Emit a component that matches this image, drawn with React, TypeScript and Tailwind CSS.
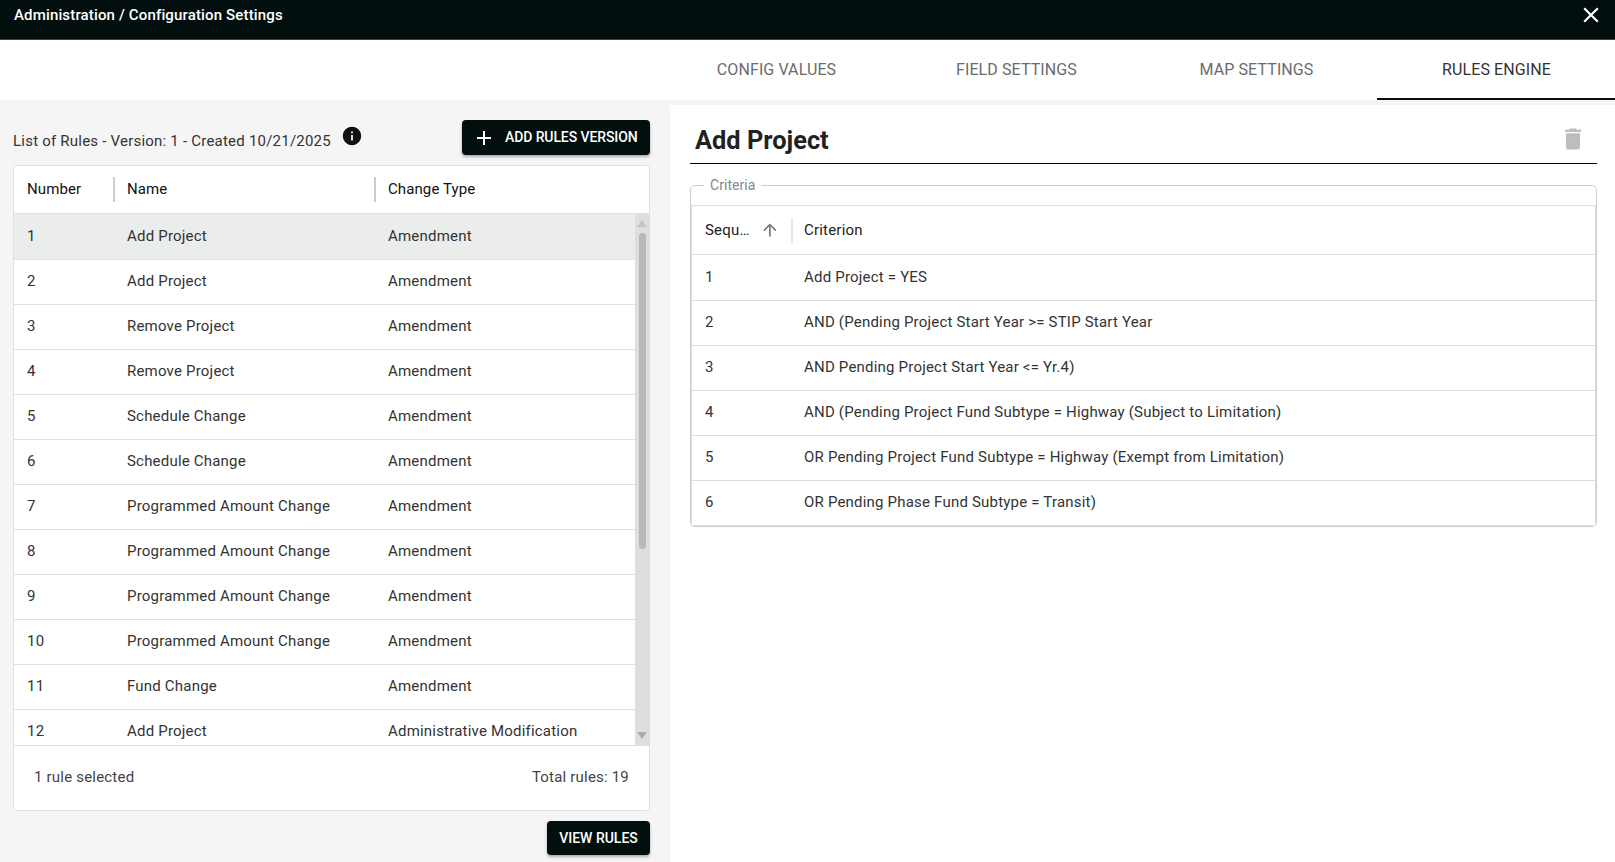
import React from "react";
import { MdAdd, MdClose, MdInfo, MdDelete, MdArrowUpward } from "react-icons/md";

const rules = [
  ["1", "Add Project", "Amendment"],
  ["2", "Add Project", "Amendment"],
  ["3", "Remove Project", "Amendment"],
  ["4", "Remove Project", "Amendment"],
  ["5", "Schedule Change", "Amendment"],
  ["6", "Schedule Change", "Amendment"],
  ["7", "Programmed Amount Change", "Amendment"],
  ["8", "Programmed Amount Change", "Amendment"],
  ["9", "Programmed Amount Change", "Amendment"],
  ["10", "Programmed Amount Change", "Amendment"],
  ["11", "Fund Change", "Amendment"],
  ["12", "Add Project", "Administrative Modification"],
];

const criteria = [
  ["1", "Add Project = YES"],
  ["2", "AND (Pending Project Start Year >= STIP Start Year"],
  ["3", "AND Pending Project Start Year <= Yr.4)"],
  ["4", "AND (Pending Project Fund Subtype = Highway (Subject to Limitation)"],
  ["5", "OR Pending Project Fund Subtype = Highway (Exempt from Limitation)"],
  ["6", "OR Pending Phase Fund Subtype = Transit)"],
];

const tabs = ["CONFIG VALUES", "FIELD SETTINGS", "MAP SETTINGS", "RULES ENGINE"];

export default function App() {
  return (
    <div className="flex h-[862px] w-full flex-col overflow-hidden bg-white font-['Roboto',sans-serif] text-[14px] text-[#212121]">
      <header className="flex h-[40px] shrink-0 items-start justify-between border-b border-[#444] bg-[#020f0e] pl-[14px] pr-[11px] text-white">
        <span className="mt-[5px] text-[15px] font-medium leading-[20px] tracking-[0.15px]">Administration / Configuration Settings</span>
        <MdClose className="mt-[2px] text-[26px]" />
      </header>

      <nav className="flex h-[60px] shrink-0 justify-end gap-[2px] bg-white">
        {tabs.map((t, i) => (
          <div
            key={t}
            className={
              i === 3
                ? "flex w-[238px] items-center justify-center border-b-2 border-[#020f0e] pl-[1px] pt-[2px] text-[16px] tracking-[0.1px] text-[#333]"
                : "flex w-[238px] items-center justify-center pl-[1px] text-[16px] tracking-[0.1px] text-[#6b6b6b]"
            }
          >
            {t}
          </div>
        ))}
      </nav>

      <main className="flex min-h-0 flex-1 bg-[#f5f5f5]">
        <section className="flex w-[670px] shrink-0 flex-col pl-[13px] pr-[20px]">
          <div className="flex h-[65px] shrink-0 items-start justify-between pt-[20px]">
            <div className="flex items-start">
              <span className="mt-[11px] text-[15px] leading-[20px] tracking-[0.22px] text-[#333]">List of Rules - Version: 1 - Created 10/21/2025</span>
              <MdInfo className="ml-[10px] mt-[5px] text-[22px] text-[#111]" />
            </div>
            <button className="flex h-[35px] w-[188px] items-center rounded-[4px] bg-[#020f0e] pl-[10px] text-[14px] font-medium tracking-[-0.1px] text-white shadow-[0_2px_3px_rgba(0,0,0,0.3)]">
              <MdAdd className="text-[24px]" />
              <span className="ml-[9px]">ADD RULES VERSION</span>
            </button>
          </div>

          <div className="flex h-[646px] shrink-0 flex-col overflow-hidden rounded-[4px] border border-[#e0e0e0] bg-white">
            <div className="flex h-[48px] shrink-0 items-center border-b border-[#e0e0e0] text-[15px] tracking-[0.1px] text-[#111]">
              <div className="flex w-[101px] items-center justify-between pl-[13px]">
                <span>Number</span>
                <span className="h-[25px] w-[2px] bg-[#ccc]" />
              </div>
              <div className="flex w-[261px] items-center justify-between pl-[12px]">
                <span>Name</span>
                <span className="h-[25px] w-[2px] bg-[#ccc]" />
              </div>
              <div className="pl-[12px]">Change Type</div>
            </div>

            <div className="flex min-h-0 flex-1 border-b border-[#e0e0e0]">
              <div className="min-w-0 flex-1 overflow-hidden text-[15px] tracking-[0.2px]">
                {rules.map((r, i) => (
                  <div
                    key={r[0]}
                    className={
                      i === 0
                        ? "flex h-[46px] items-center border-b border-[#e0e0e0] bg-[#ebeded] text-[#333]"
                        : "flex h-[45px] items-center border-b border-[#e0e0e0] pb-[1px] text-[#333]"
                    }
                  >
                    <div className="w-[100px] pl-[13px]">{r[0]}</div>
                    <div className="w-[261px] pl-[13px]">{r[1]}</div>
                    <div className="pl-[13px]">{r[2]}</div>
                  </div>
                ))}
              </div>
              <div className="flex w-[14px] shrink-0 flex-col items-center bg-[#dedede]">
                <svg className="mt-[6px] shrink-0" width="10" height="7" viewBox="0 0 10 7">
                  <path d="M5 0 L10 7 L0 7 Z" fill="#c4c4c4" />
                </svg>
                <div className="mt-[6px] h-[316px] w-[7px] shrink-0 rounded-[4px] bg-[#b8b8b8]" />
                <div className="flex-1" />
                <svg className="mb-[6px] shrink-0" width="10" height="7" viewBox="0 0 10 7">
                  <path d="M5 7 L10 0 L0 0 Z" fill="#aaaaaa" />
                </svg>
              </div>
            </div>

            <div className="flex h-[64px] shrink-0 justify-between pl-[20px] pr-[20px] pt-[21px] text-[15px] leading-[20px] tracking-[0.2px] text-[#444]">
              <span>1 rule selected</span>
              <span>Total rules: 19</span>
            </div>
          </div>

          <div className="flex shrink-0 justify-end pt-[10px]">
            <button className="flex h-[34px] w-[103px] items-center justify-center rounded-[4px] bg-[#020f0e] text-[14px] font-medium text-white shadow-[0_2px_3px_rgba(0,0,0,0.3)]">
              VIEW RULES
            </button>
          </div>
        </section>

        <section className="mt-[5px] flex min-w-0 flex-1 flex-col bg-white pl-[20px] pr-[18px]">
          <div className="flex h-[59px] shrink-0 items-start justify-between border-b border-[#000] pl-[5px]">
            <h1 className="mt-[18px] text-[25.4px] font-bold leading-[34px] text-[#212121]">Add Project</h1>
            <MdDelete className="mr-[10px] mt-[20px] text-[28px] text-[#bdbdbd]" />
          </div>

          <fieldset className="mt-[11px] rounded-[5px] border border-[#ccc]">
            <legend className="ml-[13px] px-[6px] text-[14px] leading-[20px] tracking-[0.05px] text-[#7f8890]">Criteria</legend>
            <div className="mt-[10px] border border-b-0 border-[#e0e0e0] border-x-[#ddd]">
              <div className="flex h-[49px] items-center border-b border-[#e0e0e0] text-[15px] tracking-[0.2px] text-[#222]">
                <div className="flex w-[101px] items-center pl-[13px]">
                  <span className="w-[56px]">Sequ…</span>
                  <MdArrowUpward className="text-[20px] text-[#777]" />
                  <span className="ml-[11px] h-[25px] w-[2px] bg-[#e4e4e4]" />
                </div>
                <div className="pl-[11px]">Criterion</div>
              </div>
              {criteria.map((c, i) => (
                <div
                  key={c[0]}
                  className={
                    i === 0
                      ? "flex h-[46px] items-center border-b border-[#ddd] pb-[1px] text-[15px] tracking-[0.2px] text-[#333]"
                      : "flex h-[45px] items-center border-b border-[#ddd] pb-[2px] text-[15px] tracking-[0.2px] text-[#333]"
                  }
                >
                  <div className="w-[101px] pl-[13px]">{c[0]}</div>
                  <div className="pl-[11px]">{c[1]}</div>
                </div>
              ))}
            </div>
          </fieldset>
        </section>
      </main>
    </div>
  );
}
